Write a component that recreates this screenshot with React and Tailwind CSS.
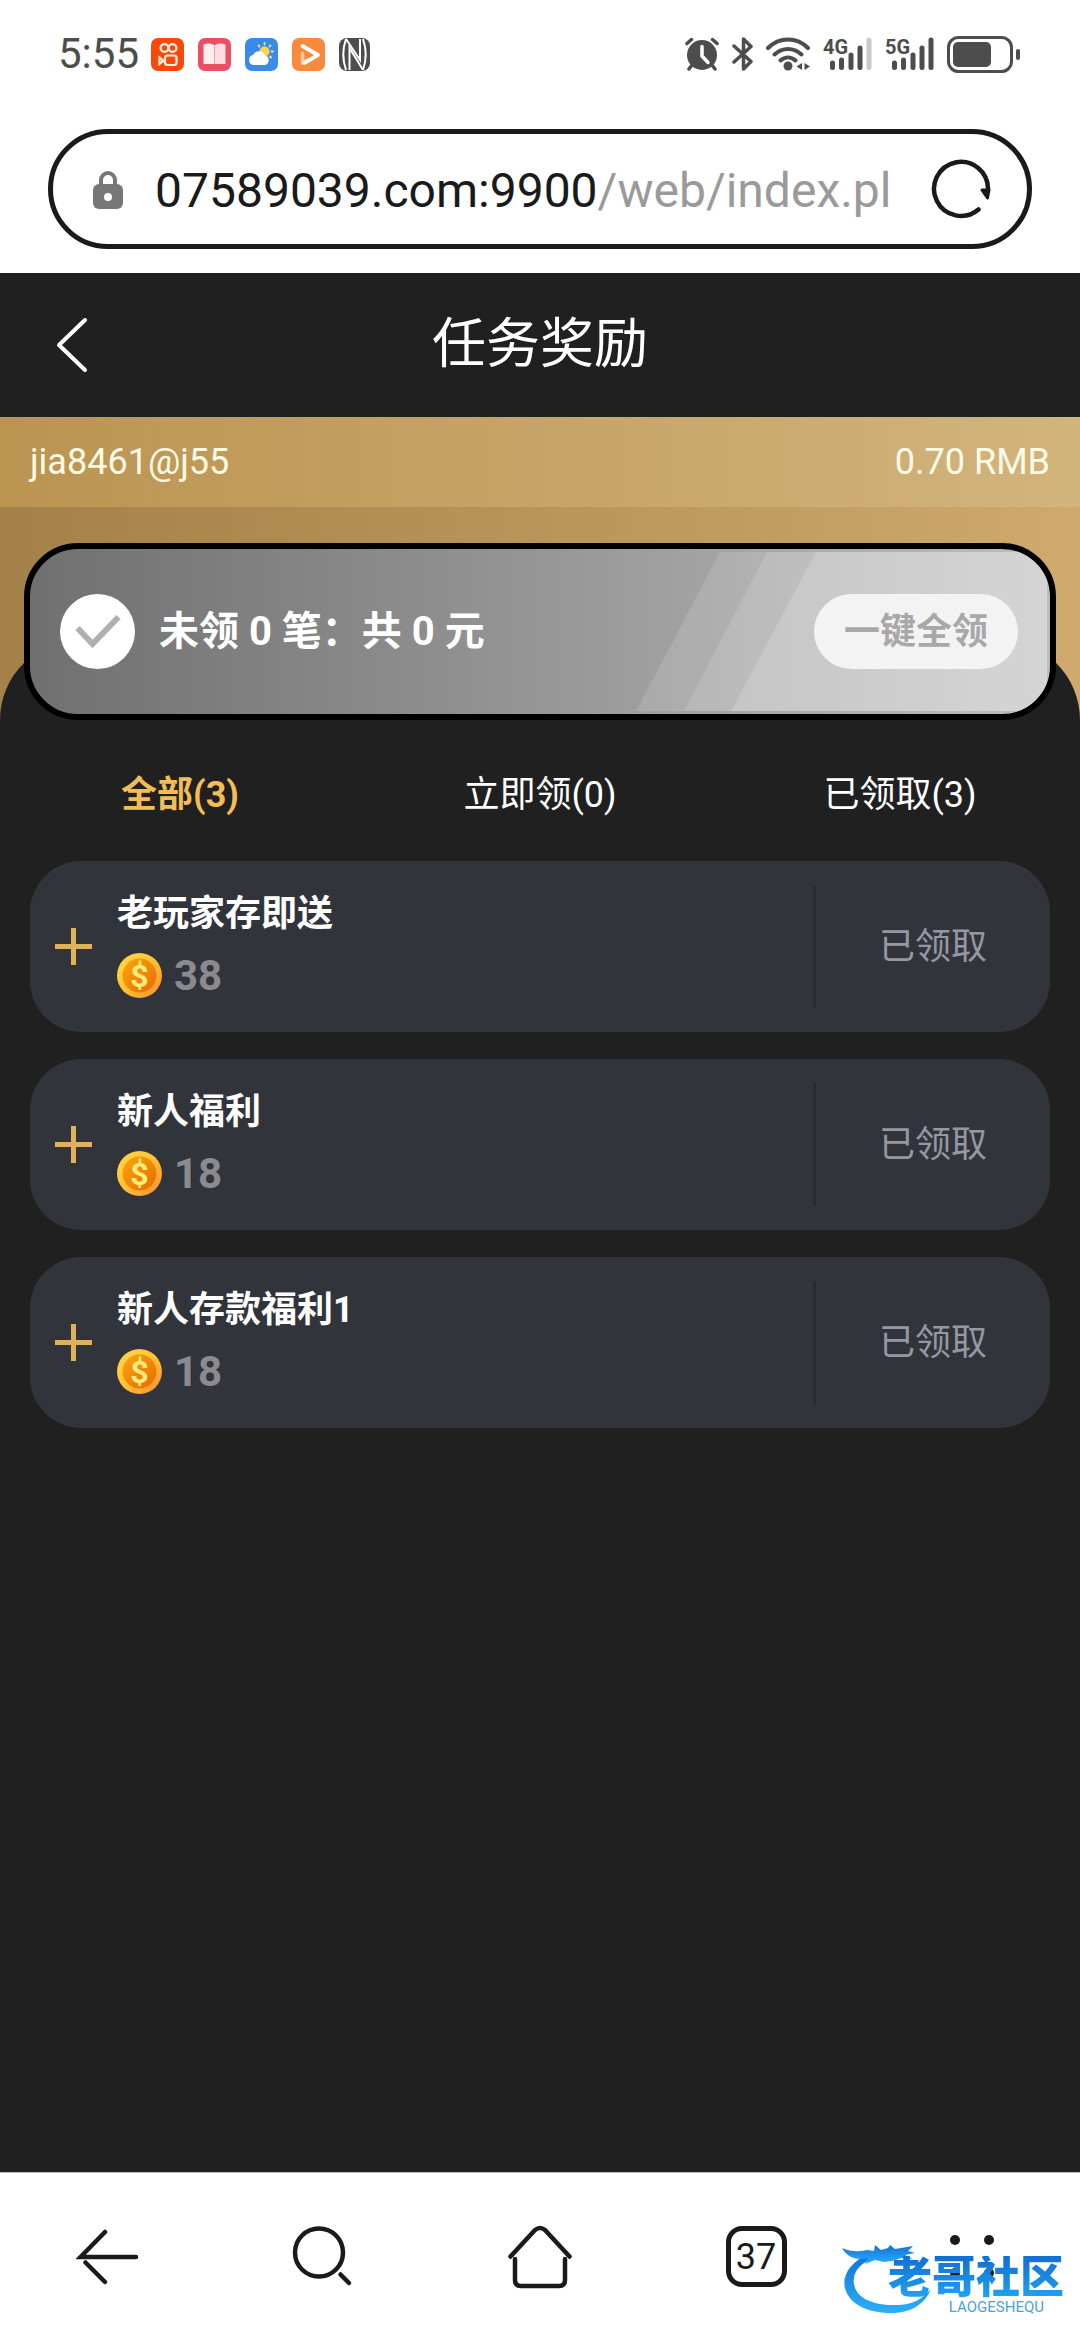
import React, { useState } from 'react';

const rewards = [
  { id: 1, title: '老玩家存即送', amount: 38 },
  { id: 2, title: '新人福利', amount: 18 },
  { id: 3, title: '新人存款福利1', amount: 18 },
];

const tabs = [
  { key: 'all', label: '全部(3)' },
  { key: 'pending', label: '立即领(0)' },
  { key: 'claimed', label: '已领取(3)' },
];

const SignalBars = ({ label, weak = false }) => (
  <svg className="h-9 w-[49px] overflow-visible" viewBox="0 0 49 36" role="img" aria-label={label}>
    <text x="0" y="18" fontSize="20" fontWeight="700" fill="#4d4d4d">{label}</text>
    <g stroke="#4d4d4d" strokeWidth="5" strokeLinecap="round">
      <path d="M9.500 27v4.500M18.500 24v7.500M28 19v12.500M37 12v19.500" />
      <path d="M46 4v27.500" stroke={weak ? '#c9c9c9' : '#4d4d4d'} />
    </g>
  </svg>
);

const StatusBar = () => (
  <div className="flex h-[108px] items-center justify-between pr-[60px] pl-[58px] text-[#4d4d4d]">
    <div className="flex items-center gap-[14px]">
      <span className="w-[79px] text-[42px] leading-[54px] whitespace-nowrap">5:55</span>
      <svg className="size-[33px]" viewBox="0 0 33 33" fill="none">
        <rect width="33" height="33" rx="7" fill="#f9480b" />
        <g stroke="#fff3e0" strokeWidth="2.200">
          <circle cx="13.500" cy="10" r="3.900" />
          <circle cx="21.500" cy="10" r="3.900" />
          <rect x="14" y="17.500" width="11.500" height="9.500" rx="2.500" />
          <path d="M8.500 19.500v6.500l4-3.200z" />
        </g>
      </svg>
      <svg className="size-[33px]" viewBox="0 0 33 33">
        <rect width="33" height="33" rx="7" fill="#ea4f63" />
        <path d="M5.500 6.500c4-1.500 8-1 11 .8v18.700H5.500z" fill="#ffeef0" />
        <path d="M27.500 6.500c-4-1.500-8-1-11 .8v18.700h11z" fill="#ffdde1" />
        <path d="M16.500 7v19" stroke="#f2a4ae" />
      </svg>
      <svg className="size-[33px]" viewBox="0 0 33 33">
        <rect width="33" height="33" rx="7" fill="#3a8be8" />
        <circle cx="19.500" cy="13.500" r="5" fill="#ffd54a" />
        <path d="M19.500 5v1.500M13.500 7.500l1 1M25.500 7.500l-1 1M28 13.500h-1.500M26 19.500l-1-1" stroke="#ffe08a" strokeWidth="1.800" strokeLinecap="round" />
        <path d="M9 27a5 5 0 0 1-.8-9.900 6.300 6.300 0 0 1 11.700.1A5 5 0 0 1 19.500 27z" fill="#fff" />
      </svg>
      <svg className="size-[33px]" viewBox="0 0 33 33" fill="none">
        <rect width="33" height="33" rx="7" fill="#f98a3c" />
        <path d="M10.500 15.500v9.500l5.500-3.200" stroke="#ffc79c" strokeWidth="3.500" strokeLinecap="round" strokeLinejoin="round" />
        <path d="M10.500 8 26 17 12.500 24.800" stroke="#fff" strokeWidth="3.800" strokeLinecap="round" strokeLinejoin="round" />
      </svg>
      <svg className="h-[33px] w-[31px]" viewBox="0 0 31 33" fill="none" stroke="#fff" strokeWidth="2">
        <rect width="31" height="33" rx="8" fill="#4d4d4d" stroke="none" />
        <path d="M7 1C3.500 11 3.500 22 7 32M24 1c3.500 10 3.500 21 0 31" />
        <path d="M10.500 32V10L24 32M7 1l14 21V1" />
      </svg>
    </div>
    <div className="flex items-center gap-[13px]">
      <svg className="h-[34px] w-[34px]" viewBox="0 0 34 34" fill="none" strokeLinecap="round">
        <circle cx="17" cy="18" r="15" fill="#4d4d4d" />
        <path d="M2 6.500 6.500 2.500M32 6.500l-4.500-4M7 28l-3 4M27 28l3 4" stroke="#4d4d4d" strokeWidth="3.500" />
        <path d="M17 9.500V19l6 6.500" stroke="#fff" strokeWidth="3.500" />
      </svg>
      <svg className="h-[34px] w-[21px]" viewBox="0 0 21 34" fill="none" stroke="#4d4d4d" strokeWidth="3.500" strokeLinejoin="round" strokeLinecap="round">
        <path d="M2 9l17 15.500-7.500 7.500V2l7.500 7.500L2 25" />
      </svg>
      <svg className="h-[34px] w-[44px]" viewBox="0 0 44 34" fill="none" stroke="#4d4d4d" strokeWidth="4" strokeLinecap="round">
        <path d="M2 11C13-.5 31-.5 42 11M8.500 17.500c8-7.500 19-7.500 27 0M14.500 23.500c4.500-4 10.500-4 15 0" />
        <circle cx="22" cy="29" r="4.500" fill="#4d4d4d" stroke="none" />
        <path d="M36 26v7l-5.500-3.500zM38.500 26v7l5.500-3.500z" fill="#4d4d4d" stroke="none" />
      </svg>
      <SignalBars label="4G" weak />
      <SignalBars label="5G" />
      <svg className="h-[37px] w-[73px]" viewBox="0 0 73 37">
        <rect x="1.500" y="1.500" width="63" height="34" rx="10" fill="none" stroke="#4d4d4d" strokeWidth="3" />
        <rect x="6" y="6" width="38" height="25" rx="5" fill="#4d4d4d" />
        <rect x="69" y="13" width="4" height="11" rx="2" fill="#4d4d4d" />
      </svg>
    </div>
  </div>
);

const AddressBar = () => (
  <div className="px-12 pt-[21px] pb-6">
    <div className="flex h-[120px] items-center rounded-full border-[5px] border-[#1a1a1a] pr-9 pl-10">
      <svg className="h-[39px] w-[30px] shrink-0" viewBox="0 0 30 39">
        <path d="M8 16V10a7 7 0 0 1 14 0v6" fill="none" stroke="#777" strokeWidth="4" />
        <rect y="14" width="30" height="25" rx="6" fill="#777" />
        <circle cx="15" cy="27" r="4" fill="#fff" />
      </svg>
      <button type="button" aria-label="Address" className="ml-8 min-w-0 flex-1 overflow-hidden pt-1 text-left text-[48px] leading-[72px] whitespace-nowrap text-[#1a1a1a]">
        07589039.com:9900<span className="text-[#9a9a9a]">/web/index.pl</span>
      </button>
      <button type="button" aria-label="Reload" className="ml-8 shrink-0">
        <svg className="h-[60px] w-[60px]" viewBox="0 0 60 60" fill="none" stroke="#1a1a1a" strokeWidth="4.500" strokeLinecap="round">
          <path d="M47.500 50.500A27 27 0 1 1 57 31" />
          <path d="M51 31h7l-1.500 8z" fill="#1a1a1a" strokeWidth="3" strokeLinejoin="round" />
        </svg>
      </button>
    </div>
  </div>
);

const Coin = () => (
  <svg className="size-[45px]" viewBox="0 0 45 45">
    <defs>
      <linearGradient id="coinRim" x1="0" y1="0" x2="1" y2="1">
        <stop offset="0" stopColor="#ffd84f" />
        <stop offset=".5" stopColor="#ffc233" />
        <stop offset="1" stopColor="#fb8a2e" />
      </linearGradient>
      <linearGradient id="coinFace" x1="0" y1="0" x2="1" y2="1">
        <stop offset="0" stopColor="#fba70a" />
        <stop offset="1" stopColor="#e66a05" />
      </linearGradient>
    </defs>
    <circle cx="22.500" cy="22.500" r="22.500" fill="url(#coinRim)" />
    <circle cx="22.500" cy="22.500" r="17" fill="url(#coinFace)" />
    <text x="22.500" y="33.500" textAnchor="middle" fontSize="32" fontWeight="700" fill="#ffec7d">$</text>
  </svg>
);

const RewardCard = ({ title, amount }) => (
  <li className="flex h-[171px] items-center rounded-[51px] bg-[#32343c]">
    <button type="button" aria-label="展开" className="mx-[25px] shrink-0">
      <svg className="size-[37px]" viewBox="0 0 37 37" stroke="#dcb25c" strokeWidth="5">
        <path d="M0 18.500h37M18.500 0v37" />
      </svg>
    </button>
    <div className="min-w-0 flex-1 pb-1">
      <h2 className="text-[36px] leading-[54px] font-bold text-white">{title}</h2>
      <div className="mt-2 flex items-center gap-3">
        <Coin />
        <span className="text-[42px] leading-[54px] font-bold text-[#8b8b8f]">{amount}</span>
      </div>
    </div>
    <div className="flex h-[123px] w-[237px] shrink-0 items-center justify-center border-l-[3px] border-[#292b30]">
      <span className="text-[36px] leading-[54px] text-[#9698a1]">已领取</span>
    </div>
  </li>
);

const ClaimBanner = () => (
  <section className="relative flex h-[177px] items-center overflow-hidden rounded-[54px] border-[6px] border-black bg-linear-to-r from-[#707070] to-[#bebebe] pr-8 pl-[30px]">
    <svg className="absolute top-[3px] right-[3px] h-[159px] w-[411px]" viewBox="0 0 411 159" fill="#fff">
      <path d="M84 0h327v159H0z" opacity=".13" />
      <path d="M131 0h280v159H48z" opacity=".13" />
      <path d="M180 0h231v159H95z" opacity=".17" />
    </svg>
    <svg className="relative size-[75px] shrink-0" viewBox="0 0 75 75">
      <circle cx="37.500" cy="37.500" r="37.500" fill="#fff" />
      <path d="M17.500 34 32.500 50 58.500 23" fill="none" stroke="#b0b0b0" strokeWidth="6" />
    </svg>
    <p className="relative ml-6 flex-1 text-[40px] leading-[54px] font-bold text-white">未领 0 笔：共 0 元</p>
    <button type="button" className="relative h-[75px] w-[204px] shrink-0 rounded-full bg-[#f3f3f3] text-[36px] leading-[54px] font-bold text-[#a8a8a8]">
      一键全领
    </button>
  </section>
);

const Watermark = () => (
  <div className="pointer-events-none absolute right-4 bottom-[26px] flex h-[70px] w-[222px] justify-end">
    <svg className="absolute top-0 left-0 h-[70px] w-[92px]" viewBox="0 0 92 70">
      <defs>
        <linearGradient id="dragon" x1="0" y1="0" x2="0" y2="1">
          <stop offset="0" stopColor="#1272d6" />
          <stop offset="1" stopColor="#2ab0f8" />
        </linearGradient>
      </defs>
      <g fill="url(#dragon)">
        <path d="M28 10C8 17 0 32 3 44c4 16 22 25 46 25 18 0 33-7 40-24-9 11-21 17-38 16-22 0-37-8-39-21C10 29 18 18 33 14z" />
        <path d="M0 4c9 4 17 4 25 2l7 1 1-6 6 5 7-2 2-3 5 4 18-3-5 5 7 2-10 2 8 4-12-1-9 3-8 1-9-2-10 4 3-6-7 1c-9 0-15-4-19-11z" />
      </g>
    </svg>
    <div className="relative flex flex-col items-end">
      <span className="mt-3 bg-linear-to-b from-[#126fd0] to-[#23a4f2] bg-clip-text text-[44px] leading-[44px] font-black text-transparent">老哥社区</span>
      <span className="mr-5 text-[15px] leading-[14px] text-[#4d9fe0]">LAOGESHEQU</span>
    </div>
  </div>
);

const BrowserNav = () => (
  <nav className="relative grid h-[168px] grid-cols-5 place-items-center border-t border-[#bbb] bg-white">
    <button type="button" aria-label="后退">
      <svg className="size-16" viewBox="0 0 64 64" fill="none" stroke="#1a1a1a" strokeWidth="4.500" strokeLinecap="round">
        <path d="M60 32H4.500L29 7M29 57 9.500 37.500" />
      </svg>
    </button>
    <button type="button" aria-label="搜索">
      <svg className="size-16" viewBox="0 0 64 64" fill="none" stroke="#1a1a1a" strokeWidth="4.500" strokeLinecap="round">
        <circle cx="27" cy="27.500" r="24" />
        <path d="M48.500 49.500 57 58" />
      </svg>
    </button>
    <button type="button" aria-label="主页">
      <svg className="size-16" viewBox="0 0 64 64" fill="none" stroke="#1a1a1a" strokeWidth="4.500" strokeLinecap="round" strokeLinejoin="round">
        <path d="M2.500 31.500 27 5q5-4 10 0l24.500 26.500" />
        <path d="M7 34v21q0 6 6 6h38q6 0 6-6V34" />
      </svg>
    </button>
    <button type="button" aria-label="标签页" className="flex size-[61px] items-center justify-center rounded-2xl border-[5px] border-[#1a1a1a] text-[36px] leading-[48px] text-[#1a1a1a]">
      37
    </button>
    <button type="button" aria-label="菜单">
      <svg className="size-16" viewBox="0 0 64 64" fill="#1a1a1a">
        <circle cx="15" cy="15" r="5" />
        <circle cx="49" cy="15" r="5" />
        <circle cx="15" cy="48" r="5" />
        <circle cx="49" cy="48" r="5" />
      </svg>
    </button>
    <Watermark />
  </nav>
);

const App = () => {
  const [activeTab, setActiveTab] = useState('all');

  return (
    <div className="flex min-h-screen flex-col bg-white font-[Roboto,'Noto_Sans_CJK_SC',sans-serif]">
      <StatusBar />
      <AddressBar />
      <header className="grid h-36 grid-cols-[1fr_auto_1fr] items-center bg-[#202020] text-white">
        <button type="button" aria-label="返回" className="ml-[56px] justify-self-start">
          <svg className="h-[56px] w-8" viewBox="0 0 32 56" fill="none" stroke="currentColor" strokeWidth="4" strokeLinecap="round" strokeLinejoin="round">
            <path d="M29 3 3 28l26 25" />
          </svg>
        </button>
        <h1 className="text-[54px] leading-[72px]">任务奖励</h1>
      </header>
      <div className="flex h-[90px] items-center justify-between bg-linear-to-r from-[#bb9450] to-[#d2b47d] px-[30px] text-[36px] text-[#fffbe6]">
        <span>jia8461@j55</span>
        <span>0.70 RMB</span>
      </div>
      <main className="flex-1 bg-[#202020]">
        <div className="bg-linear-to-r from-[#a38148] to-[#cfa96d] pt-[133px]">
          <div className="h-20 rounded-t-[80px] bg-[#202020]" />
        </div>
        <div className="-mt-[177px] px-6">
          <ClaimBanner />
        </div>
        <div role="tablist" className="grid h-[141px] grid-cols-3 items-center pt-2">
          {tabs.map((tab) => (
            <button
              key={tab.key}
              type="button"
              role="tab"
              aria-selected={activeTab === tab.key}
              onClick={() => setActiveTab(tab.key)}
              className={`text-[36px] leading-[54px] ${
                activeTab === tab.key ? 'font-bold text-[#f3bd55]' : 'text-white'
              }`}
            >
              {tab.label}
            </button>
          ))}
        </div>
        <ul className="flex flex-col gap-[27px] px-[30px]">
          {rewards.map((item) => (
            <RewardCard key={item.id} title={item.title} amount={item.amount} />
          ))}
        </ul>
      </main>
      <BrowserNav />
    </div>
  );
};

export default App;
